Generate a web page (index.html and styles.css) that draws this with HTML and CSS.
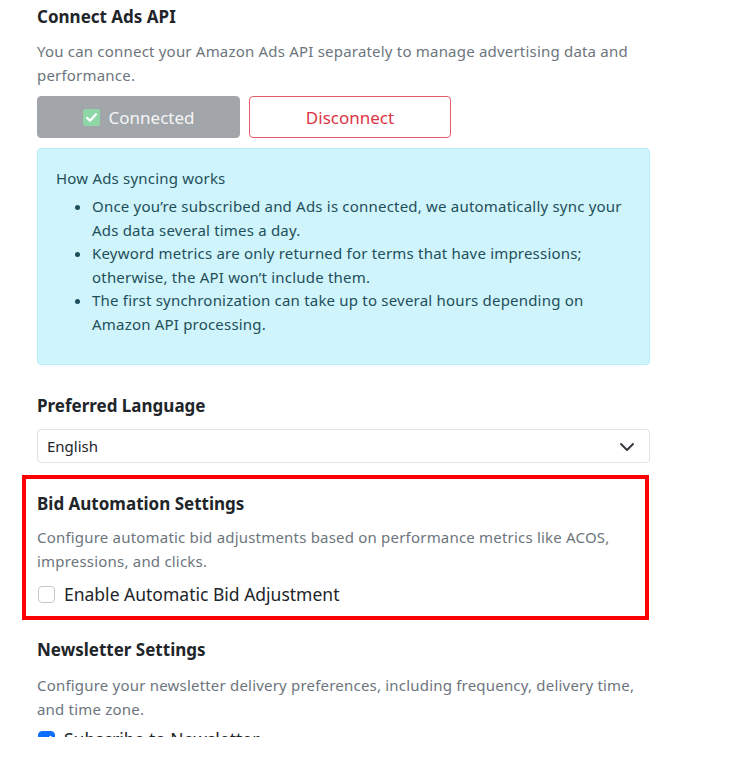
FILE: index.html
```html
<!DOCTYPE html>
<html lang="en">
<head>
<meta charset="utf-8">
<link rel="stylesheet" href="styles.css">
</head>
<body>
<div class="viewport">
  <div class="content">
    <section class="section">
      <h2 class="heading">Connect Ads API</h2>
      <p class="desc">You can connect your Amazon Ads API separately to manage advertising data and performance.</p>
      <div class="btn-row">
        <button class="btn btn-connected" disabled>
          <svg class="check-emoji" width="17" height="17" viewBox="0 0 17 17"><rect x="0" y="0" width="17" height="17" rx="2.5" fill="#8fd6a6"/><path d="M4 8.8l3 3 6-6.6" fill="none" stroke="#fff" stroke-width="2.2" stroke-linecap="round" stroke-linejoin="round"/></svg>
          <span>Connected</span>
        </button>
        <button class="btn btn-disconnect">Disconnect</button>
      </div>
      <div class="info">
        <p class="info-title">How Ads syncing works</p>
        <ul class="info-list">
          <li>Once you’re subscribed and Ads is connected, we automatically sync your Ads data several times a day.</li>
          <li>Keyword metrics are only returned for terms that have impressions; otherwise, the API won’t include them.</li>
          <li>The first synchronization can take up to several hours depending on Amazon API processing.</li>
        </ul>
      </div>
    </section>

    <section class="section">
      <h2 class="heading">Preferred Language</h2>
      <div class="select">
        <span>English</span>
        <svg class="chevron" width="16" height="16" viewBox="0 0 16 16"><path d="M2 5l6 6 6-6" fill="none" stroke="#343a40" stroke-width="2" stroke-linecap="round" stroke-linejoin="round"/></svg>
      </div>
    </section>

    <section class="section highlighted">
      <h2 class="heading">Bid Automation Settings</h2>
      <p class="desc desc-bid">Configure automatic bid adjustments based on performance metrics like ACOS, impressions, and clicks.</p>
      <label class="check-row">
        <span class="checkbox"></span>
        <span class="check-label">Enable Automatic Bid Adjustment</span>
      </label>
    </section>

    <section class="section news">
      <h2 class="heading">Newsletter Settings</h2>
      <p class="desc desc-news">Configure your newsletter delivery preferences, including frequency, delivery time, and time zone.</p>
      <label class="check-row check-news">
        <span class="checkbox checked">
          <svg width="17" height="17" viewBox="0 0 17 17"><path d="M4.5 8.5l2.8 2.8 5.2-5.6" fill="none" stroke="#fff" stroke-width="2" stroke-linecap="round" stroke-linejoin="round"/></svg>
        </span>
        <span class="check-label">Subscribe to Newsletter</span>
      </label>
    </section>
  </div>
</div>
</body>
</html>
```

FILE: styles.css
```css
* { box-sizing: border-box; }
html, body {
  margin: 0;
  padding: 0;
  background: #fff;
}
body {
  font-family: "Noto Sans", "Open Sans", sans-serif;
  color: #212529;
}
.viewport {
  height: 737px;
  overflow: hidden;
}
.content {
  width: 613px;
  margin-left: 37px;
  padding-top: 6px;
  display: flex;
  flex-direction: column;
  gap: 30px;
}
.section {
  display: flex;
  flex-direction: column;
}
.heading {
  margin: 0;
  font-size: 17px;
  line-height: 22px;
  font-weight: 700;
  color: #212529;
}
.desc {
  margin: 11px 0 0;
  font-size: 15px;
  line-height: 24px;
  letter-spacing: 0.2px;
  color: #6c757d;
}
.desc-bid { margin-top: 10px; }
.desc-news {
  margin-top: 13px;
  line-height: 23.5px;
}
.news { margin-top: 3px; }
.btn-row {
  display: flex;
  gap: 9px;
  margin-top: 9px;
}
.btn {
  height: 42px;
  border-radius: 4px;
  font-family: inherit;
  font-size: 17px;
  display: flex;
  align-items: center;
  justify-content: center;
  gap: 9px;
  padding: 0;
}
.btn-connected {
  width: 203px;
  background: #a2a6ab;
  border: 1px solid #a2a6ab;
  color: #f4f5f6;
}
.btn-disconnect {
  width: 202px;
  background: #fff;
  border: 1px solid #e35d6a;
  color: #dc3545;
}
.info {
  margin-top: 10px;
  background: #cff4fc;
  border: 1px solid #b6effb;
  border-radius: 4px;
  padding: 18px 18px 28px;
  font-size: 15px;
  line-height: 23.5px;
  letter-spacing: 0.2px;
}
.info-title {
  margin: 0 0 4.5px;
  color: #1e4f5a;
}
.info-list {
  margin: 0;
  padding-left: 36px;
  color: #1e4f5a;
}
.select {
  margin-top: 12px;
  height: 34px;
  border: 1px solid #dee2e6;
  border-radius: 4px;
  display: flex;
  align-items: center;
  justify-content: space-between;
  padding: 0 14px 0 9px;
  font-size: 15px;
  color: #212529;
}
.chevron { margin-top: 1px; }
.highlighted {
  position: relative;
}
.highlighted::after {
  content: "";
  position: absolute;
  left: -15px;
  right: 1px;
  top: -18px;
  bottom: -14px;
  border: 4px solid #ff0000;
  pointer-events: none;
}
.check-row {
  margin-top: 9px;
  display: flex;
  align-items: center;
  gap: 9px;
  line-height: 24px;
}
.check-news { margin-top: 6px; }
.checkbox {
  width: 17px;
  height: 17px;
  border: 1px solid #c4c8cc;
  border-radius: 4px;
  margin-left: 1px;
  flex: none;
  display: flex;
}
.checkbox.checked {
  background: #0d6efd;
  border-color: #0d6efd;
}
.checkbox.checked svg { margin: -1px; }
.check-label {
  font-size: 17.5px;
  color: #212529;
}
```
